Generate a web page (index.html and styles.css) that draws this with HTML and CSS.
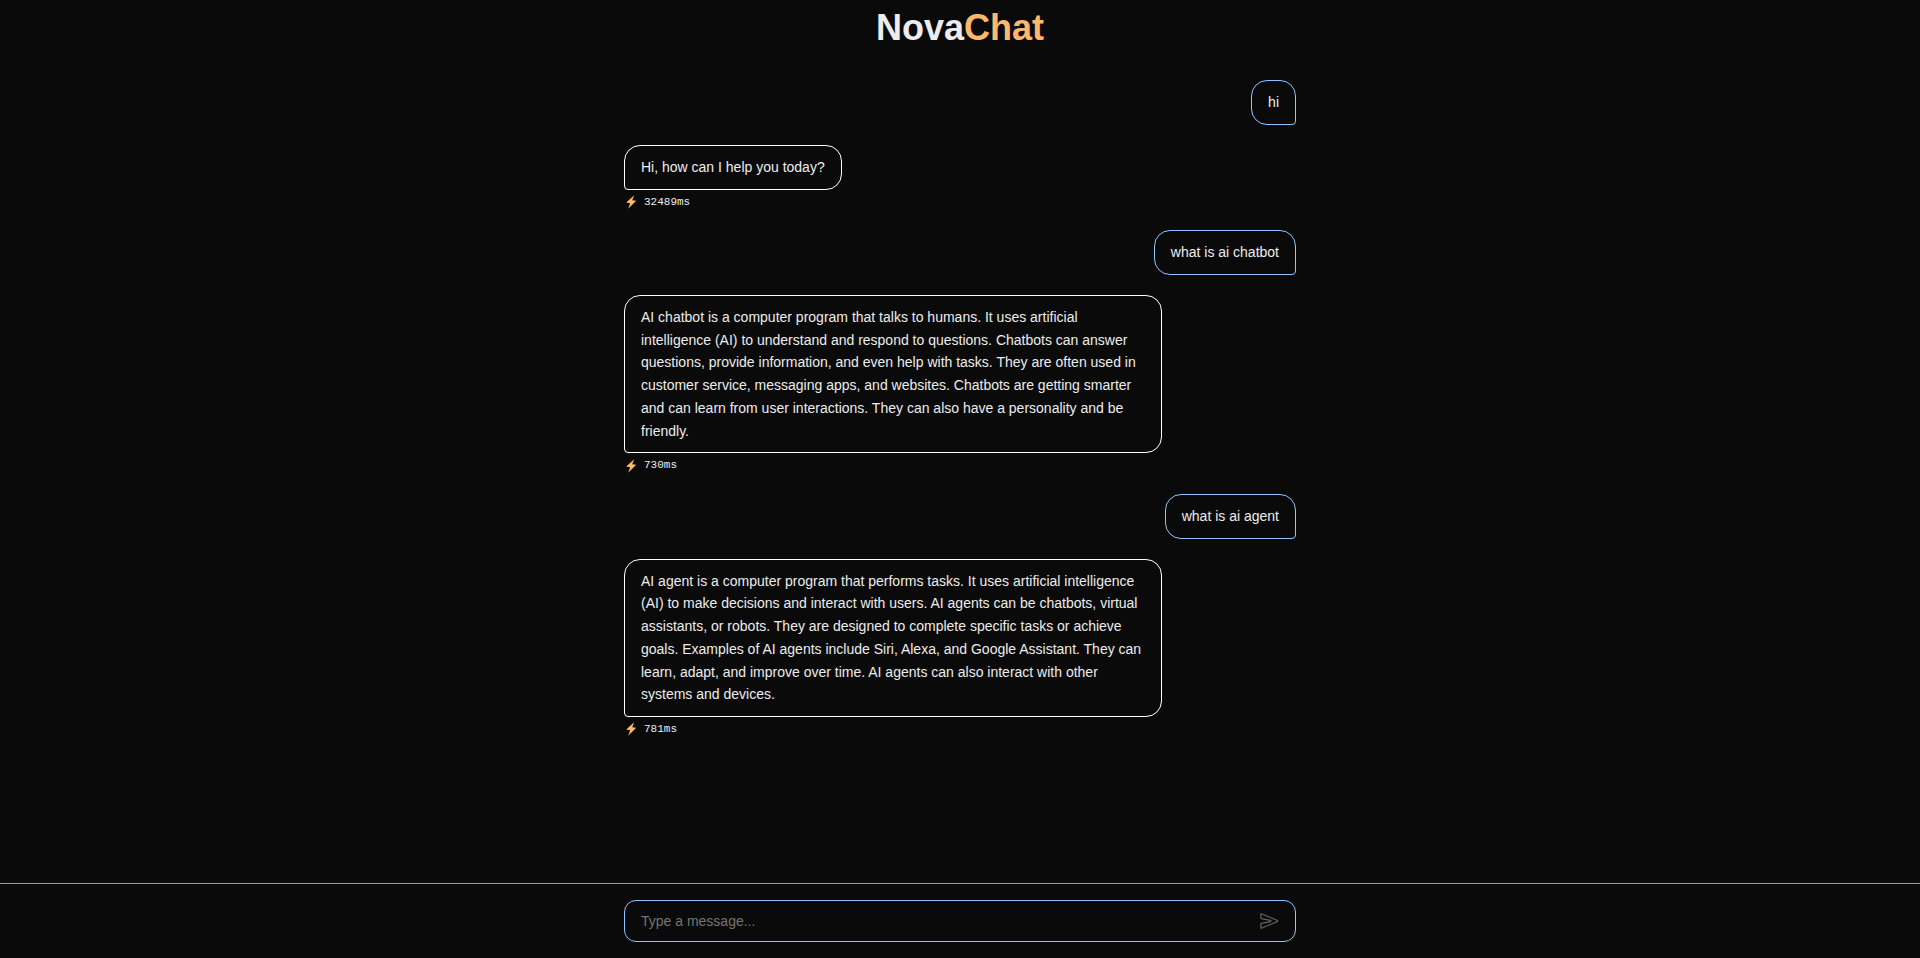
FILE: index.html
```html
<!DOCTYPE html>
<html lang="en">
<head>
<meta charset="utf-8">
<meta name="viewport" content="width=device-width, initial-scale=1">
<title>NovaChat</title>
<link rel="stylesheet" href="styles.css">
</head>
<body>
<svg class="sprite" aria-hidden="true">
  <symbol id="bolt" viewBox="0 0 13 14">
    <path d="M10.2 .2 2.2 7.6 6.2 8.2 4.2 13.8 12.2 5.8 8.2 5.2Z"/>
  </symbol>
</svg>
<header class="header">
  <h1 class="brand">Nova<span class="brand-accent">Chat</span></h1>
</header>
<main class="chat">
  <div class="thread">
    <div class="message message-user"><p class="bubble">hi</p></div>
    <div class="message message-bot">
      <p class="bubble">Hi, how can I help you today?</p>
      <div class="meta"><svg class="bolt" aria-hidden="true"><use href="#bolt"/></svg><span>32489ms</span></div>
    </div>
    <div class="message message-user"><p class="bubble">what is ai chatbot</p></div>
    <div class="message message-bot">
      <p class="bubble">AI chatbot is a computer program that talks to humans. It uses artificial intelligence (AI) to understand and respond to questions. Chatbots can answer questions, provide information, and even help with tasks. They are often used in customer service, messaging apps, and websites. Chatbots are getting smarter and can learn from user interactions. They can also have a personality and be friendly.</p>
      <div class="meta"><svg class="bolt" aria-hidden="true"><use href="#bolt"/></svg><span>730ms</span></div>
    </div>
    <div class="message message-user"><p class="bubble">what is ai agent</p></div>
    <div class="message message-bot">
      <p class="bubble">AI agent is a computer program that performs tasks. It uses artificial intelligence (AI) to make decisions and interact with users. AI agents can be chatbots, virtual assistants, or robots. They are designed to complete specific tasks or achieve goals. Examples of AI agents include Siri, Alexa, and Google Assistant. They can learn, adapt, and improve over time. AI agents can also interact with other systems and devices.</p>
      <div class="meta"><svg class="bolt" aria-hidden="true"><use href="#bolt"/></svg><span>781ms</span></div>
    </div>
  </div>
</main>
<footer class="footer">
  <form class="composer">
    <input class="composer-input" type="text" placeholder="Type a message..." aria-label="Message">
    <button class="send" type="button" aria-label="Send" disabled>
      <svg viewBox="-18 -9 530 530" aria-hidden="true"><path d="m470.3 271.15-427.14 176.16a7.83 7.83 0 0 1-11.16-7V327a8 8 0 0 1 6.51-7.86l247.62-47c17.36-3.29 17.36-28.15 0-31.44l-247.63-47a8 8 0 0 1-6.5-7.85V72.59c0-5.74 5.88-10.26 11.16-8L470.3 241.76a16 16 0 0 1 0 29.39z"/></svg>
    </button>
  </form>
</footer>
</body>
</html>
```
FILE: styles.css
```css
* {
  box-sizing: border-box;
  margin: 0;
}

body {
  display: flex;
  flex-direction: column;
  height: 100vh;
  background: #0a0a0a;
  color: #ededed;
  font-family: "Liberation Sans", Arial, Helvetica, sans-serif;
  font-size: 14px;
}

.sprite {
  display: none;
}

.header {
  padding: 8px 16px;
  text-align: center;
}

.brand {
  font-size: 36px;
  line-height: 40px;
}

.brand-accent {
  color: #ffb86a;
}

.chat {
  flex: 1;
  min-height: 0;
  overflow-y: auto;
  padding: 24px 16px;
}

.thread {
  display: flex;
  flex-direction: column;
  gap: 20px;
  max-width: 672px;
  margin: 0 auto;
}

.message {
  display: flex;
  flex-direction: column;
  align-items: flex-start;
}

.message-user {
  align-items: flex-end;
}

.bubble {
  max-width: 80%;
  padding: 10px 16px;
  border: 1px solid #ffffff;
  border-radius: 16px 16px 16px 4px;
  line-height: 1.625;
}

.message-user .bubble {
  border-color: #8ec5ff;
  border-radius: 16px 16px 4px 16px;
}

.meta {
  display: flex;
  align-items: center;
  gap: 7px;
  margin-top: 4px;
  font-family: "Liberation Mono", "Courier New", monospace;
  font-size: 11px;
  line-height: 1.5;
}

.bolt {
  width: 13px;
  height: 14px;
  fill: #ffb86a;
}

.footer {
  padding: 16px;
  border-top: 1px solid #ff8904;
}

.composer {
  display: flex;
  align-items: center;
  max-width: 672px;
  height: 42px;
  margin: 0 auto;
  padding: 0 16px;
  border: 1px solid #8ec5ff;
  border-radius: 12px;
}

.composer-input {
  flex: 1;
  min-width: 0;
  padding: 0;
  border: 0;
  outline: 0;
  background: transparent;
  color: inherit;
  font: inherit;
  line-height: 20px;
}

.composer-input::placeholder {
  color: #757575;
}

.send {
  display: flex;
  padding: 0;
  border: 0;
  background: transparent;
}

.send svg {
  width: 20px;
  height: 20px;
  fill: none;
  stroke: #606060;
  stroke-width: 32;
  stroke-linecap: round;
  stroke-linejoin: round;
}
```
